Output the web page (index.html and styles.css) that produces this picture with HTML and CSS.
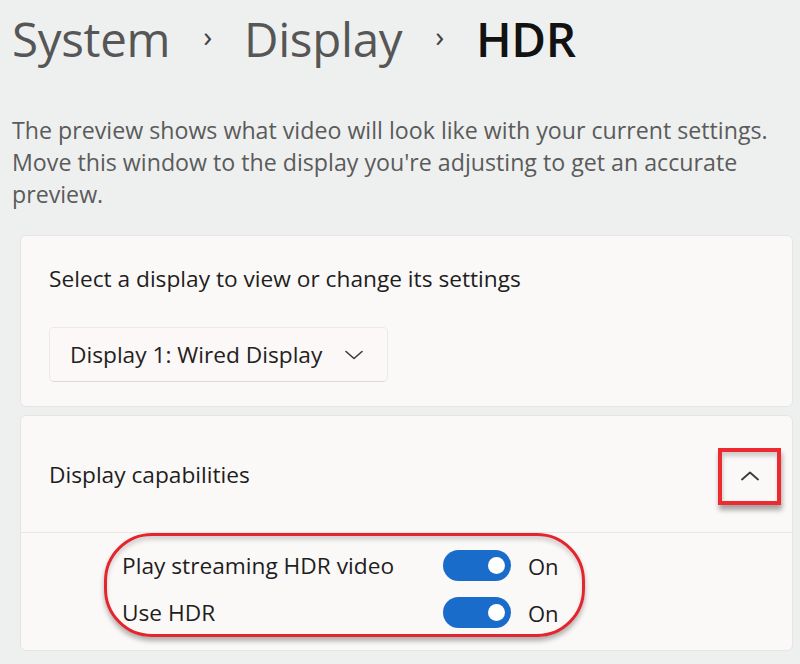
FILE: index.html
```html
<!DOCTYPE html>
<html lang="en">
<head>
<meta charset="utf-8">
<title>HDR</title>
<link rel="stylesheet" href="styles.css">
</head>
<body>
<div class="page">
  <h1 class="crumbs">
    <span class="crumb">System</span>
    <span class="sep">›</span>
    <span class="crumb">Display</span>
    <span class="sep">›</span>
    <span class="crumb current">HDR</span>
  </h1>
  <p class="desc">The preview shows what video will look like with your current settings. Move this window to the display you're adjusting to get an accurate preview.</p>

  <section class="card select-card">
    <div class="card-label">Select a display to view or change its settings</div>
    <button class="dropdown" type="button">
      <span>Display 1: Wired Display</span>
      <svg class="chev" width="18" height="10" viewBox="0 0 18 10"><path d="M1 1.5 L9 8.5 L17 1.5" fill="none" stroke="#3a3a3a" stroke-width="1.6" stroke-linecap="round" stroke-linejoin="round"/></svg>
    </button>
  </section>

  <section class="card expander">
    <div class="exp-head">
      <span class="exp-title">Display capabilities</span>
      <span class="exp-btn">
        <svg width="18" height="10" viewBox="0 0 18 10"><path d="M1 8.5 L9 1.5 L17 8.5" fill="none" stroke="#3a3a3a" stroke-width="1.8" stroke-linecap="round" stroke-linejoin="round"/></svg>
      </span>
    </div>
    <div class="exp-body">
      <div class="ring">
        <div class="row">
          <span class="row-label">Play streaming HDR video</span>
          <span class="toggle"><span class="knob"></span></span>
          <span class="state">On</span>
        </div>
        <div class="row">
          <span class="row-label">Use HDR</span>
          <span class="toggle"><span class="knob"></span></span>
          <span class="state">On</span>
        </div>
      </div>
    </div>
  </section>
</div>
</body>
</html>
```

FILE: styles.css
```css
* { box-sizing: border-box; }
html, body { margin: 0; padding: 0; }
body {
  background: #eef0ef;
  font-family: "Open Sans", "Noto Sans", sans-serif;
  color: #1d1d1d;
  width: 800px;
  height: 664px;
  overflow: hidden;
}
.page {
  padding: 9px 7px 0 12px;
}
.crumbs {
  margin: 0;
  display: flex;
  align-items: center;
  font-size: 47.5px;
  font-weight: 400;
  line-height: 60px;
  height: 60px;
  letter-spacing: -0.3px;
  color: #565656;
}
.crumb.current { color: #121212; font-weight: 600; }
.sep {
  font-size: 30px;
  margin: 0 32px 6px 33px;
  color: #444;
}
.desc {
  margin: 45px 0 0 0;
  font-size: 23.2px;
  line-height: 32px;
  color: #5b5b5b;
  width: 780px;
}
.card {
  margin-left: 8px;
  width: 773px;
  background: #fbf9f8;
  border: 1px solid #e6e5e4;
  border-radius: 6px;
}
.select-card {
  margin-top: 25px;
  height: 172px;
  padding: 27px 0 0 28px;
}
.card-label {
  font-size: 22.7px;
  line-height: 32px;
  color: #1e1e1e;
}
.dropdown {
  margin-top: 32px;
  width: 339px;
  height: 55px;
  display: flex;
  align-items: center;
  justify-content: space-between;
  padding: 0 24px 0 20px;
  background: #fbf8f7;
  border: 1px solid #ebe9e8;
  border-bottom-color: #dcdad9;
  border-radius: 5px;
  font-family: inherit;
  font-size: 22.7px;
  color: #222;
}
.expander {
  margin-top: 8px;
  height: 236px;
}
.exp-head {
  height: 117px;
  display: flex;
  align-items: center;
  justify-content: space-between;
  padding: 0 11px 0 28px;
  border-bottom: 1px solid #e9e7e6;
}
.exp-title { font-size: 22.7px; color: #1e1e1e; }
.exp-btn {
  width: 63px;
  height: 57px;
  border: 4px solid #ec2a30;
  display: flex;
  align-items: center;
  justify-content: center;
  box-shadow: 1px 5px 5px rgba(0,0,0,0.35), inset 1px 4px 4px rgba(0,0,0,0.18);
  margin-top: 4px;
}
.exp-body {
  padding: 0 0 0 83px;
}
.ring {
  width: 481px;
  height: 104px;
  border: 3px solid #e3262e;
  border-radius: 48px;
  box-shadow: 0 4px 5px rgba(0,0,0,0.3), inset 0 4px 4px rgba(0,0,0,0.15);
  padding: 14px 0 0 15px;
  display: flex;
  flex-direction: column;
  gap: 16px;
}
.row {
  display: flex;
  align-items: center;
  height: 31px;
}
.row-label {
  width: 321px;
  font-size: 22.7px;
  color: #1e1e1e;
}
.toggle {
  width: 68px;
  height: 31px;
  border-radius: 16px;
  background: #1a6ccb;
  display: flex;
  align-items: center;
  justify-content: flex-end;
  padding-right: 6px;
}
.knob {
  width: 17px;
  height: 17px;
  border-radius: 50%;
  background: #fff;
}
.state {
  margin-left: 17px;
  font-size: 22px;
  color: #1e1e1e;
}
```
